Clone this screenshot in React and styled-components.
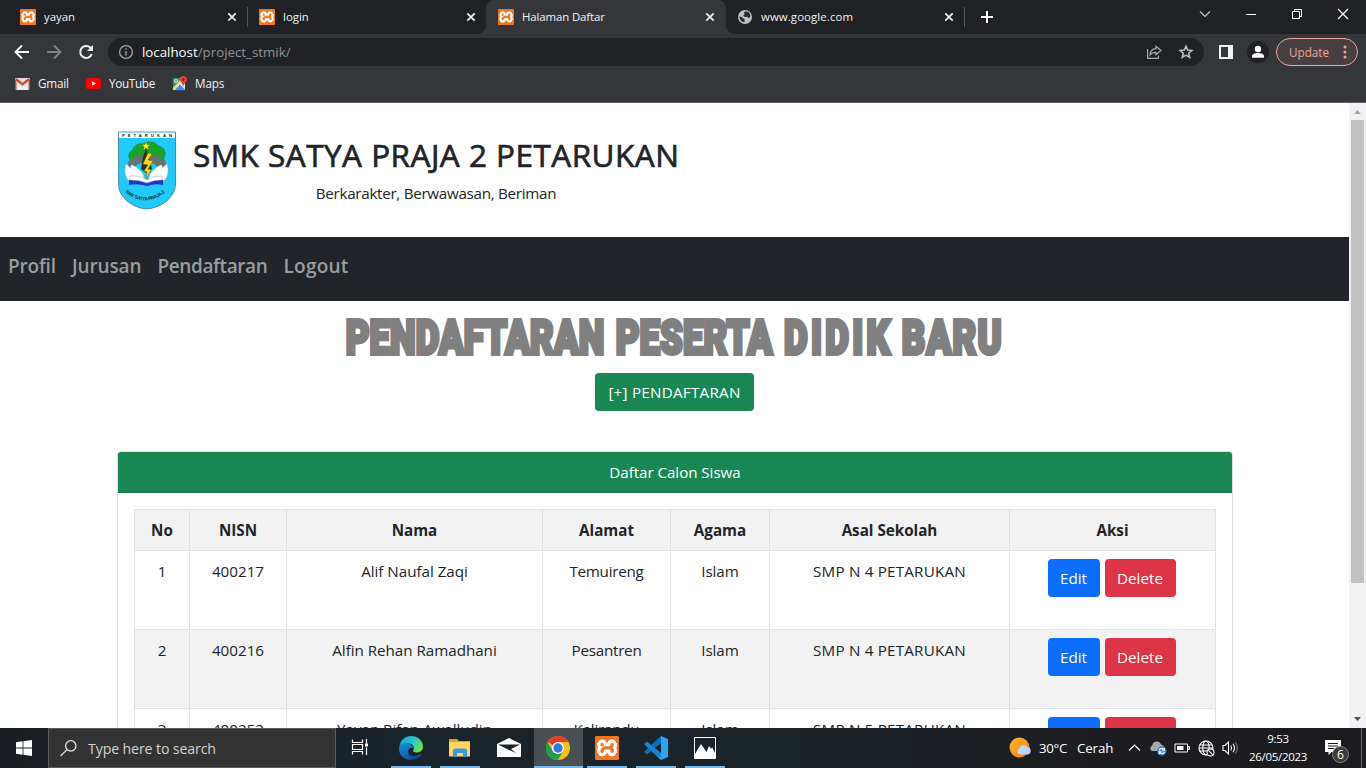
import React from "react";
import styled, { createGlobalStyle, css } from "styled-components";
import { SiXampp } from "react-icons/si";

const Global = createGlobalStyle`
  *, *::before, *::after { box-sizing: border-box; }
  html, body { margin: 0; padding: 0; overflow: hidden; }
  body { font-family: "Open Sans", "Noto Sans", sans-serif; background: #fff; }
  svg { display: block; flex: none; }
  button { font: inherit; border: 0; padding: 0; }
`;

const Screen = styled.div`
  width: 1366px;
  height: 768px;
  display: flex;
  flex-direction: column;
  overflow: hidden;
`;

/* ---------- browser chrome ---------- */

const TabStrip = styled.div`
  height: 34px;
  flex: none;
  display: flex;
  background: #202124;
  padding-left: 8px;
`;

const Tab = styled.div`
  width: 239px;
  height: 34px;
  display: flex;
  align-items: center;
  padding: 0 10px 0 12px;
  color: #f1f3f4;
  font-size: 11.4px;
  position: relative;
  ${(p) =>
    p.$active
      ? css`
          width: 240px;
          padding-right: 11px;
          margin-right: -1px;
          background: #35363a;
          border-radius: 8px 8px 0 0;
          &::before, &::after {
            content: "";
            position: absolute;
            bottom: 0;
            width: 8px;
            height: 8px;
          }
          &::before { left: -8px; background: radial-gradient(circle at 0 0, transparent 7.5px, #35363a 8px); }
          &::after { right: -8px; background: radial-gradient(circle at 100% 0, transparent 7.5px, #35363a 8px); }
        `
      : ""}
`;

const TabTitle = styled.span`
  flex: 1;
  margin-left: 8px;
  padding-bottom: 2px;
  letter-spacing: ${(p) => p.$track || 0}px;
  white-space: nowrap;
`;

const TabDivider = styled.i`
  width: 1px;
  height: 20px;
  margin-top: 7px;
  margin-right: -1px;
  background: #55575b;
`;

const NewTab = styled.div`
  padding: 11px 0 0 17px;
  flex: 1;
`;

const WindowButtons = styled.div`
  display: flex;
  width: 184px;
  height: 28px;
  svg { width: 46px; height: 28px; }
`;

const Toolbar = styled.div`
  height: 36px;
  flex: none;
  display: flex;
  align-items: center;
  background: #35363a;
  padding: 0 8px 0 12px;
`;

const NavIcons = styled.div`
  display: flex;
  gap: 12px;
  width: 96px;
`;

const AddressBar = styled.div`
  width: 1096px;
  height: 28px;
  border-radius: 14px;
  background: #202124;
  display: flex;
  align-items: center;
  padding: 0 10px;
  font-size: 13.3px;
  color: #8f9296;
`;

const Url = styled.span`
  flex: 1;
  margin-left: 8px;
  b { font-weight: 400; color: #fff; }
`;

const AddressIcons = styled.div`
  display: flex;
  gap: 16px;
`;

const ToolbarEnd = styled.div`
  display: flex;
  align-items: center;
  margin-left: 15px;
`;

const Avatar = styled.div`
  width: 22px;
  height: 22px;
  border-radius: 50%;
  background: #202124;
  margin: 0 7px 0 14px;
`;

const UpdatePill = styled.div`
  width: 82px;
  height: 28px;
  border: 1px solid #f2a7a0;
  border-radius: 14px;
  background: #483f42;
  color: #f2a39b;
  font-size: 11.7px;
  display: flex;
  align-items: center;
  justify-content: space-between;
  padding: 0 10px 1px 12px;
`;

const Bookmarks = styled.div`
  height: 33px;
  flex: none;
  display: flex;
  align-items: center;
  background: #35363a;
  border-bottom: 1px solid #5d5e62;
  padding: 0 0 5px 15px;
  color: #f1f3f4;
  font-size: 11.7px;
`;

const Bookmark = styled.div`
  display: flex;
  align-items: center;
  width: ${(p) => p.$w}px;
  gap: ${(p) => p.$gap || 8}px;
  letter-spacing: ${(p) => p.$track || 0}px;
  span { padding-bottom: 1px; }
`;

/* ---------- web page ---------- */

const Viewport = styled.div`
  height: 625px;
  flex: none;
  display: flex;
  overflow: hidden;
`;

const Page = styled.main`
  width: 1349px;
  height: 625px;
  overflow: hidden;
  color: #212529;
  font-size: 15.3px;
`;

const SchoolHeader = styled.header`
  height: 134px;
  padding: 28px 0 0 118px;
  display: flex;
`;

const SchoolText = styled.div`
  width: 488px;
  margin-left: 15px;
  text-align: center;
  white-space: nowrap;
`;

const SchoolName = styled.h1`
  margin: 4px 0 0;
  height: 40px;
  line-height: 39px;
  font-size: 31.5px;
  font-weight: 500;
  -webkit-text-stroke: 0.7px #212529;
  text-align: left;
  letter-spacing: 0.48px;
`;

const Motto = styled.p`
  margin: 6px 0 0;
  padding-right: 2px;
  line-height: 24px;
  font-size: 15.2px;
  letter-spacing: -0.29px;
`;

const NavBar = styled.nav`
  height: 64px;
  background: #212529;
  display: flex;
  gap: 16px;
  padding: 14px 8px;
  line-height: 30px;
  font-size: 19px;
  font-weight: 600;
  color: #9b9d9f;
`;

const NavLink = styled.a`
  width: ${(p) => p.$w}px;
  letter-spacing: ${(p) => p.$track}px;
  white-space: nowrap;
`;

const Hero = styled.section`
  height: 150px;
  display: flex;
  flex-direction: column;
  align-items: center;
`;

const HeroTitle = styled.h2`
  margin: 8px 0 0;
  height: 58px;
  line-height: 58px;
  display: flex;
  font-family: Roboto, sans-serif;
  font-size: 49px;
  font-weight: 900;
  color: #808080;
  -webkit-text-stroke: 4px #808080;
  white-space: nowrap;
  transform: scaleX(0.743);
`;

const HeroWord = styled.span`
  letter-spacing: ${(p) => p.$track}px;
  margin-right: ${(p) => p.$after || 0}px;
`;

const Button = styled.button`
  height: 38px;
  width: ${(p) => p.$w}px;
  border-radius: 4px;
  color: #fff;
  background: ${(p) => p.$bg};
  letter-spacing: ${(p) => p.$track || 0}px;
  margin-top: ${(p) => p.$top || 0}px;
  font-size: 15.2px;
  white-space: nowrap;
`;

const Card = styled.section`
  width: 1116px;
  height: 400px;
  margin-left: 117px;
  border: 1px solid #dfdfdf;
  border-radius: 4px;
`;

const CardHeader = styled.div`
  height: 41px;
  line-height: 40px;
  border-radius: 3px 3px 0 0;
  border-bottom: 1px solid #167446;
  background: #198754;
  color: #fff;
  text-align: center;
  font-size: 15.2px;
  letter-spacing: -0.06px;
`;

const Table = styled.table`
  display: block;
  width: 1082px;
  margin: 16px;
`;

const TableBody = styled.tbody`
  display: block;
`;

const Row = styled.tr`
  display: grid;
  grid-template-columns: 55px 97px 256px 128px 99px 240px 207px;
  height: ${(p) => (p.$head ? 41 : 79)}px;
  background: ${(p) => (p.$shade ? "#f2f2f2" : "#fff")};
  font-weight: ${(p) => (p.$head ? 700 : 400)};
  text-align: center;
`;

const Cell = styled.td`
  border: solid #dee2e6;
  border-width: 1px 0 0 1px;
  padding: 8px 0;
  line-height: 24px;
  white-space: nowrap;
  letter-spacing: ${(p) => p.$track || 0}px;
  font-size: 15.2px;
  &:last-child { border-right-width: 1px; }
`;

const Actions = styled.div`
  display: flex;
  justify-content: center;
  gap: 5px;
  padding-right: 2px;
`;

const Scrollbar = styled.aside`
  width: 17px;
  background: #f1f1f1;
  display: flex;
  flex-direction: column;
  align-items: center;
  justify-content: space-between;
`;

const Thumb = styled.div`
  width: 13px;
  height: 463px;
  background: #c1c1c1;
  margin-bottom: auto;
`;

/* ---------- taskbar ---------- */

const Taskbar = styled.footer`
  height: 40px;
  flex: none;
  display: flex;
  background: linear-gradient(90deg, #1a1e22 0, #19232a 400px, #1a2429 750px, #1c1e22 1000px, #1c1b1f 1366px);
  color: #fff;
`;

const Start = styled.div`
  width: 48px;
  padding: 12px 0 0 16px;
`;

const Search = styled.div`
  width: 288px;
  height: 40px;
  background: #333;
  border: 1px solid #5c5c5c;
  display: flex;
  align-items: center;
  padding-left: 11px;
  gap: 11px;
  color: #d2d2d2;
  font-size: 14.2px;
`;

const SearchText = styled.span`
  letter-spacing: -0.14px;
  padding-top: 1px;
`;

const TaskView = styled.div`
  width: 50.5px;
  display: flex;
  align-items: center;
  padding: 0 0 2px 15px;
`;

const AppSlot = styled.div`
  width: 49px;
  height: 40px;
  display: flex;
  flex-direction: column;
  align-items: center;
  justify-content: space-between;
  padding-top: 8px;
  background: ${(p) => (p.$active ? "#495054" : "transparent")};
  &::after {
    content: "";
    width: ${(p) => (p.$active ? "100%" : "40px")};
    height: 2px;
    background: ${(p) => (p.$idle ? "transparent" : "#76b9ed")};
  }
`;

const Tray = styled.div`
  flex: 1;
  display: flex;
  align-items: center;
  justify-content: flex-end;
  font-size: 13.3px;
`;

const Weather = styled.div`
  display: flex;
  width: 119px;
  align-items: center;
  line-height: 18px;
  white-space: nowrap;
  letter-spacing: -0.12px;
`;

const Temp = styled.span`
  margin-left: 7px;
  width: 38px;
  letter-spacing: -0.3px;
`;

const TrayIcons = styled.div`
  display: flex;
  align-items: center;
  gap: 7.5px;
  width: 116px;
`;

const Clock = styled.div`
  width: 68px;
  font-size: 11.5px;
  line-height: 18px;
  text-align: center;
  letter-spacing: -0.3px;
  padding-bottom: 1px;
`;

const Notice = styled.div`
  width: 50px;
  height: 40px;
  padding: 11px 0 0 13px;
  position: relative;
  border-right: 1px solid #666;
  margin-right: 4px;
`;

const Count = styled.span`
  position: absolute;
  left: 20px;
  top: 18px;
  width: 17px;
  height: 17px;
  border: 1px solid #888;
  border-radius: 50%;
  background: #3a3a3c;
  font-size: 12px;
  line-height: 15px;
  text-align: center;
`;

/* ---------- icons ---------- */

const XamppTile = styled.div`
  width: ${(p) => p.$size}px;
  height: ${(p) => p.$size}px;
  border-radius: ${(p) => p.$size / 12}px;
  background: radial-gradient(#fff 62%, #f37623 64%);
  color: #f37623;
  overflow: hidden;
  flex: none;
  svg { transform: scale(1.16); }
`;

const Xampp = ({ size = 16 }) => (
  <XamppTile $size={size}>
    <SiXampp size={size} />
  </XamppTile>
);

const Close = () => (
  <svg width="10" height="10" viewBox="0 0 10 10" stroke="#f1f3f4" strokeWidth="1.7">
    <path d="M1.300 1.300l7.400 7.400M8.700 1.300L1.300 8.700" />
  </svg>
);

const Globe = () => (
  <svg width="16" height="16" viewBox="0 0 16 16">
    <circle cx="8" cy="8" r="7" fill="#bdc1c6" />
    <path d="M2.4 7.2l2.8 1.2 2.4 2.2v2.6C4.8 13 2.4 10.6 2.4 7.200zM7 3.600l2-1.400 3 1.200 1.500 3.400-1.500 2.600-1.800-1.600-2.600.2-1.400-1.400 1.400-1z" fill="#292a2d" />
  </svg>
);

const Back = ({ dim }) => (
  <svg width="20" height="20" viewBox="0 0 20 20" fill="none" stroke={dim ? "#808286" : "#f1f3f4"} strokeWidth="1.9">
    {dim ? <path d="M3 10h13M10 3.500l6.500 6.500-6.500 6.500" /> : <path d="M17 10H4M10 3.500L3.500 10l6.500 6.500" />}
  </svg>
);

const Reload = () => (
  <svg width="20" height="20" viewBox="0 0 20 20" fill="none" stroke="#f1f3f4" strokeWidth="2">
    <path d="M15.800 12.200A6 6 0 1 1 14.400 5.700L16 7.400" />
    <path d="M17 3v6h-6z" fill="#f1f3f4" stroke="none" />
  </svg>
);

const Info = () => (
  <svg width="16" height="16" viewBox="0 0 16 16" fill="none" stroke="#9aa0a6" strokeWidth="1.400">
    <circle cx="8" cy="8" r="6.400" />
    <path d="M8 7v4.500M8 4.300v1.500" />
  </svg>
);

const Share = () => (
  <svg width="16" height="16" viewBox="0 0 16 16" fill="none" stroke="#a9acb0" strokeWidth="1.200">
    <path d="M1.600 5v9.400h10.800v-3" />
    <path d="M10 2.200l5 4.300-5 4.300V8.300C7 8.200 5.500 9 4 11c.300-3.800 2.500-6 6-6.300z" />
  </svg>
);

const Star = () => (
  <svg width="16" height="16" viewBox="0 0 16 16" fill="none" stroke="#bdc1c6" strokeWidth="1.500">
    <path d="M8 2.200l1.700 3.900 4.200.4-3.200 2.800 1 4.100L8 11.200l-3.700 2.200 1-4.100-3.200-2.800 4.200-.4z" />
  </svg>
);

const SidePanel = () => (
  <svg width="14" height="14" viewBox="0 0 14 14">
    <path d="M0 0h14v14H0zM2 2v10h7V2z" fill="#f1f3f4" fillRule="evenodd" />
  </svg>
);

const Person = () => (
  <svg width="22" height="22" viewBox="0 0 22 22" fill="#fff">
    <circle cx="11" cy="8" r="3.200" />
    <path d="M5 16.800v-1.600c0-2 3-3.200 6-3.200s6 1.200 6 3.200v1.600z" />
  </svg>
);

const Dots = () => (
  <svg width="4" height="14" viewBox="0 0 4 14" fill="#f2a39b">
    <circle cx="2" cy="2" r="1.500" />
    <circle cx="2" cy="7" r="1.500" />
    <circle cx="2" cy="12" r="1.500" />
  </svg>
);

const Gmail = () => (
  <svg width="15" height="12" viewBox="0 0 15 12">
    <rect width="15" height="12" rx="1" fill="#dcdcdc" />
    <path d="M2.500 12V5l5 3.800 5-3.800v7z" fill="#f1f1f1" />
    <path d="M1 1.200l6.500 5.200L14 1.200" fill="none" stroke="#d93f35" strokeWidth="2.200" />
    <path d="M.7 12V1.500M14.300 12V1.500" stroke="#d93f35" strokeWidth="1.400" />
  </svg>
);

const YouTube = () => (
  <svg width="15" height="11" viewBox="0 0 15 11">
    <rect width="15" height="11" rx="2.600" fill="#f00" />
    <path d="M6 3.200v4.600l4-2.300z" fill="#fff" />
  </svg>
);

const Maps = () => (
  <svg width="16" height="16" viewBox="0 0 16 16">
    <path d="M1 2h12v12H1z" fill="#dfe3e6" />
    <path d="M1 2h9L1 12z" fill="#1fa463" />
    <path d="M2.500 14.200L8 8.500l5.500 5.700z" fill="#4a89f3" />
    <path d="M1 13L12 2" stroke="#f5d04b" strokeWidth="1.200" />
    <circle cx="4" cy="5" r="1.500" fill="none" stroke="#fff" strokeWidth=".8" />
    <path d="M11.300 0a3.500 3.500 0 0 1 3.500 3.500c0 2.400-2.700 3.200-3.500 7-.8-3.800-3.500-4.600-3.500-7A3.500 3.500 0 0 1 11.300 0z" fill="#ea4335" />
    <circle cx="11.300" cy="3.600" r="1.300" fill="#8c1f18" />
  </svg>
);

const Hand = () => (
  <path d="M8 33c1 0 3 3 5 4-1-3 1-4 3-2 3 1 6 4 9 8 1 3 1 5 0 8-5 1-11 0-15-2-3-4-4-11-2-16z" fill="#fff" stroke="#9ab7bd" strokeWidth=".5" />
);

const SchoolCrest = () => (
  <svg width="60" height="80" viewBox="0 0 60 80">
    <defs>
      <path id="crestArc" d="M7 61Q28 79 50 59" />
    </defs>
    <path d="M.5 1h57v52c0 13-14 24-29 25C14 77 .5 66 .5 53z" fill="#20cbfb" stroke="#407681" strokeWidth=".8" />
    <path d="M1 1.500h56V7H1z" fill="#fff" />
    <text x="4" y="6" fontFamily="Liberation Sans" fontWeight="700" fontSize="4.200" textLength="50" fill="#222">PETARUKAN</text>
    <path d="M13 30c-4-4-2-10 2-11 1-5 6-7 10-6 5-4 13-2 15 2 6 1 9 6 6 11 1 4-3 6-7 6H18c-3 1-5 0-5-2z" fill="#16a52c" stroke="#1e7c2a" strokeWidth=".6" />
    <path d="M9 36l2-7 3 1 1-5 5 1 2-4 4 3 4 0 4-3 3 4 5-1 1 5 4-1 2 7-7 2-7-6-6-3-8 3-5 5z" fill="#687174" />
    <path d="M23 38l2-12 3-9 3 9 3 12-6 4z" fill="#1e3826" />
    <Hand />
    <g transform="translate(57 0) scale(-1 1)"><Hand /></g>
    <path d="M11 49q10-2 18 1 9-3 16-1v5q-8-2-16 1-9-3-18-1z" fill="#2233c8" />
    <path d="M12 45q10-1 17 4 8-5 15-4v4q-8 0-15 3-8-3-17-3z" fill="#fff" stroke="#889" strokeWidth=".4" />
    <path d="M28 11l1.200 2.800 3 .1-2.300 1.800.9 3-2.800-1.700-2.600 1.700.8-3-2.300-1.900 3-.1z" fill="#ffe51f" stroke="#786b00" strokeWidth=".3" />
    <path d="M30 22l-5 11 5 1-4 6 3 1-1 7 5-9-3-1 5-8-5-1 4-6z" fill="#ffd91c" stroke="#836800" strokeWidth=".5" />
    <text fontFamily="Liberation Sans" fontWeight="700" fontSize="4.900" fill="#14344a">
      <textPath href="#crestArc" textLength="44">SMK SATYA PRAJA 2</textPath>
    </text>
  </svg>
);

const WindowsLogo = () => (
  <svg width="16" height="16" viewBox="0 0 16 16" fill="#fff">
    <path d="M0 2.200L6.600 1.300v6.300H0zM7.400 1.200L16 0v7.600H7.400zM0 8.400h6.600v6.300L0 13.800zM7.400 8.400H16V16l-8.600-1.200z" />
  </svg>
);

const Magnifier = () => (
  <svg width="17" height="17" viewBox="0 0 17 17" fill="none" stroke="#e4e4e4" strokeWidth="1.300">
    <circle cx="10.800" cy="5.900" r="5.200" />
    <path d="M7 9.600L.6 16" />
  </svg>
);

const TaskViewIcon = () => (
  <svg width="17" height="16" viewBox="0 0 17 16" fill="none" stroke="#fff" strokeWidth="1.200">
    <path d="M1.500 .5v3h10v-3M1.500 15.500v-3h10v3M1.500 5.500h10v5h-10zM15.500 0v4.500M15.500 8.500V16" />
    <path d="M14 4.500h3v3h-3z" fill="#fff" stroke="none" />
  </svg>
);

const Edge = () => (
  <svg width="24" height="24" viewBox="0 0 24 24">
    <defs>
      <linearGradient id="edgeTop" x1="0" x2="1" y1=".2" y2=".6">
        <stop offset="0" stopColor="#199fdc" />
        <stop offset=".55" stopColor="#2fc6c9" />
        <stop offset="1" stopColor="#6be345" />
      </linearGradient>
      <linearGradient id="edgeLow" x1="0" x2=".5" y1="0" y2="1">
        <stop offset="0" stopColor="#1b92dc" />
        <stop offset="1" stopColor="#0c5aa8" />
      </linearGradient>
    </defs>
    <path d="M.3 11C1 4.500 6 0 12 0c7 0 12 5 12 10.500 0 4-3 6-6.300 6-3 0-4.200-1.300-3.500-2.300 1.400-2 .7-6-3.700-6.700C6 6.800 1.500 8 .3 11z" fill="url(#edgeTop)" />
    <path d="M.1 12C.5 8.500 4 6.600 8 7c3.500.3 6.500 3 6.300 5.500-1.500-1.600-5.300-.2-5.200 3.500.1 3.500 3.500 6.600 8 5.500C14 24 9 24.800 5 22 1.500 19.600-.2 16 .1 12z" fill="url(#edgeLow)" />
    <path d="M9.100 15.500c.5 3.500 4 5 7.600 4.400 2-.3 3.800-1.300 5-2.200.8-.5 1.200.1.800.7-1.500 2.600-4 4.600-7.500 4.600-4.500-.6-7.300-4-5.900-7.500z" fill="#174e8e" />
  </svg>
);

const Explorer = () => (
  <svg width="24" height="24" viewBox="0 0 24 24">
    <path d="M1 3h8l2 2h11v5H1z" fill="#dfa21a" />
    <path d="M1 6h21v14.500H1z" fill="#ffd663" />
    <path d="M5 21v-6.500a2 2 0 0 1 2-2h10a2 2 0 0 1 2 2V21h-4v-4H9v4z" fill="#3c97dd" />
  </svg>
);

const Mail = () => (
  <svg width="24" height="24" viewBox="0 0 24 24">
    <path d="M0 8L12 2l12 6v13H0z" fill="#fff" />
    <path d="M1 8.500h22l-9 4.500 5 4-8-3.500z" fill="#1a2329" />
  </svg>
);

const Chrome = () => (
  <svg width="24" height="24" viewBox="0 0 24 24">
    <circle cx="12" cy="12" r="12" fill="#fbc116" />
    <path d="M12 12L1.600 6A12 12 0 0 1 22.400 6H12z" fill="#e33b2e" />
    <path d="M12 12l5.200 3L12 24A12 12 0 0 1 1.600 6l5.200 9z" fill="#249d4d" />
    <circle cx="12" cy="12" r="6" fill="#fff" />
    <circle cx="12" cy="12" r="4.700" fill="#3478e8" />
  </svg>
);

const VsCode = () => (
  <svg width="24" height="24" viewBox="0 0 24 24">
    <path d="M17 0v7L3 18.500 0 16l14.500-14z" fill="#0b6fb9" />
    <path d="M17 24v-7L3 5.500 0 8l14.500 14z" fill="#1686d2" />
    <path d="M17 0l7 3v18l-7 3-2.500-2 2.500-1z" fill="#2ca5ee" />
  </svg>
);

const Photos = () => (
  <svg width="24" height="24" viewBox="0 0 24 24">
    <path d="M1.500 1.500h21v21h-21z" fill="none" stroke="#fff" />
    <path d="M2 18l6-10 5.500 8 2.500-6 2 3 1-2 3 6v5H2z" fill="#fff" />
  </svg>
);

const SunCloud = () => (
  <svg width="23" height="22" viewBox="0 0 23 22">
    <defs>
      <linearGradient id="sun" x1="0" x2="1" y1="0" y2="1">
        <stop offset="0" stopColor="#fdb82c" />
        <stop offset="1" stopColor="#ef7a16" />
      </linearGradient>
    </defs>
    <circle cx="10.500" cy="10.500" r="10" fill="url(#sun)" />
    <path d="M11 17.500a3.300 3.300 0 0 1-.4-6.400 4.300 4.300 0 0 1 7.800-1A3.800 3.800 0 0 1 19 17.500z" fill="#b9d5fb" />
  </svg>
);

const Caret = () => (
  <svg width="13" height="16" viewBox="0 0 13 16" fill="none" stroke="#fff" strokeWidth="1.200">
    <path d="M1 10.500L6.500 5l5.500 5.500" />
  </svg>
);

const CloudSync = () => (
  <svg width="18" height="16" viewBox="0 0 18 16">
    <path d="M3 11a3 3 0 0 1 .3-5.500A4.500 4.500 0 0 1 12 4.500 3.600 3.600 0 0 1 14 11z" fill="#a7a7a7" />
    <circle cx="12.800" cy="11" r="4.700" fill="#2b84d0" />
    <path d="M10.100 10.300c1-2.600 4-2.400 5-.4M15.500 11.700c-1 2.600-4 2.400-5 .4M15.400 7.800v2.300h-2.300M10.200 14.200v-2.300h2.300" fill="none" stroke="#fff" strokeWidth="1.100" />
  </svg>
);

const Battery = () => (
  <svg width="16" height="16" viewBox="0 0 16 16">
    <path d="M1 4h12.500v8H1zM14 6.500h1.500v3H14z" fill="none" stroke="#fff" />
    <path d="M3 6h6.500v4H3z" fill="#fff" />
  </svg>
);

const NoNetwork = () => (
  <svg width="17" height="17" viewBox="0 0 17 17" fill="none" stroke="#fff" strokeWidth="1.100">
    <circle cx="8" cy="8" r="7" />
    <ellipse cx="8" cy="8" rx="3.200" ry="7" />
    <path d="M1.700 5h12.600M1.700 11H9M1 8h14" />
    <circle cx="12.500" cy="12.500" r="3.500" fill="#1c1c20" />
    <path d="M10.200 10.200l4.600 4.600" />
  </svg>
);

const Speaker = () => (
  <svg width="17" height="16" viewBox="0 0 17 16" fill="none" stroke="#fff" strokeWidth="1.100">
    <path d="M1 5.500h2L6.500 2v12L3 10.500H1z" />
    <path d="M8.800 5.500q1.500 2.500 0 5M11 3.700q3 4.300 0 8.600" />
    <path d="M13.300 2q4.200 6 0 12" stroke="#777" />
  </svg>
);

const NoticeIcon = () => (
  <svg width="17" height="17" viewBox="0 0 17 17">
    <path d="M0 1h16v12H6.500L3.500 16v-3H0z" fill="#fff" />
    <path d="M3 4.500h10M3 7h10M3 9.500h6" stroke="#1c1c20" />
  </svg>
);

const Arrow = ({ down }) => (
  <svg width="17" height="17" viewBox="0 0 17 17">
    {down ? <path d="M5 6h7l-3.500 4z" fill="#505050" /> : <path d="M5 11h7L8.500 7z" fill="#a3a3a3" />}
  </svg>
);

/* ---------- data ---------- */

const columns = ["No", "NISN", "Nama", "Alamat", "Agama", "Asal Sekolah", "Aksi"];
const students = [
  ["1", "400217", "Alif Naufal Zaqi", "Temuireng", "Islam", "SMP N 4 PETARUKAN"],
  ["2", "400216", "Alfin Rehan Ramadhani", "Pesantren", "Islam", "SMP N 4 PETARUKAN"],
  ["3", "400252", "Yayan Rifan Awalludin", "Kalirandu", "Islam", "SMP N 5 PETARUKAN"],
];
const tracks = [0, 0, -0.03, -0.24, -0.1, 0.2];

export default function App() {
  return (
    <Screen>
      <Global />
      <TabStrip>
        <Tab><Xampp /><TabTitle>yayan</TabTitle><Close /></Tab>
        <TabDivider />
        <Tab><Xampp /><TabTitle>login</TabTitle><Close /></Tab>
        <Tab $active><Xampp /><TabTitle $track={-0.1}>Halaman Daftar</TabTitle><Close /></Tab>
        <Tab><Globe /><TabTitle $track={0.1}>www.google.com</TabTitle><Close /></Tab>
        <TabDivider />
        <NewTab>
          <svg width="12" height="12" viewBox="0 0 12 12" stroke="#fff" strokeWidth="2"><path d="M6 0v12M0 6h12" /></svg>
        </NewTab>
        <WindowButtons>
          <svg viewBox="0 0 46 28" fill="none" stroke="#c4c6c9" strokeWidth="1.200"><path d="M18 11.500l5 5 5-5" /></svg>
          <svg viewBox="0 0 46 28" stroke="#fff"><path d="M18 14.500h10" /></svg>
          <svg viewBox="0 0 46 28" fill="none" stroke="#fff"><path d="M18.500 11.500h7v7h-7zM20.500 11V9.500h7v7H26" /></svg>
          <svg viewBox="0 0 46 28" stroke="#fff" strokeWidth="1.200"><path d="M18 9l10 10M28 9L18 19" /></svg>
        </WindowButtons>
      </TabStrip>
      <Toolbar>
        <NavIcons><Back /><Back dim /><Reload /></NavIcons>
        <AddressBar>
          <Info />
          <Url><b>localhost</b>/project_stmik/</Url>
          <AddressIcons><Share /><Star /></AddressIcons>
        </AddressBar>
        <ToolbarEnd>
          <SidePanel />
          <Avatar><Person /></Avatar>
          <UpdatePill>Update<Dots /></UpdatePill>
        </ToolbarEnd>
      </Toolbar>
      <Bookmarks>
        <Bookmark $w={71} $track={-0.2}><Gmail /><span>Gmail</span></Bookmark>
        <Bookmark $w={86} $track={-0.3}><YouTube /><span>YouTube</span></Bookmark>
        <Bookmark $w={60} $gap={7} $track={-0.1}><Maps /><span>Maps</span></Bookmark>
      </Bookmarks>

      <Viewport>
        <Page>
          <SchoolHeader>
            <SchoolCrest />
            <SchoolText>
              <SchoolName>SMK SATYA PRAJA 2 PETARUKAN</SchoolName>
              <Motto>Berkarakter, Berwawasan, Beriman</Motto>
            </SchoolText>
          </SchoolHeader>
          <NavBar>
            <NavLink $w={48} $track={-0.2}>Profil</NavLink>
            <NavLink $w={69.5} $track={-0.15}>Jurusan</NavLink>
            <NavLink $w={110} $track={-0.4}>Pendaftaran</NavLink>
            <NavLink $w={65} $track={0.25}>Logout</NavLink>
          </NavBar>
          <Hero>
            <HeroTitle>
              <HeroWord $track={0.15} $after={15}>PENDAFTARAN</HeroWord>
              <HeroWord $track={0.2} $after={15.5}>PESERTA</HeroWord>
              <HeroWord $track={4.5} $after={11.5}>DIDIK</HeroWord>
              <HeroWord $track={1.7}>BARU</HeroWord>
            </HeroTitle>
            <Button $w={159} $bg="#198754" $top={6} $track={0.25}>[+] PENDAFTARAN</Button>
          </Hero>
          <Card>
            <CardHeader>Daftar Calon Siswa</CardHeader>
            <Table cellSpacing="0">
              <TableBody>
                <Row $head $shade>
                  {columns.map((c) => <Cell as="th" key={c}>{c}</Cell>)}
                </Row>
                {students.map((s, i) => (
                  <Row key={s[0]} $shade={i % 2 === 1}>
                    {s.map((v, j) => <Cell key={j} $track={tracks[j]}>{v}</Cell>)}
                    <Cell>
                      <Actions>
                        <Button $w={52} $bg="#0d6efd">Edit</Button>
                        <Button $w={71} $bg="#dc3545">Delete</Button>
                      </Actions>
                    </Cell>
                  </Row>
                ))}
              </TableBody>
            </Table>
          </Card>
        </Page>
        <Scrollbar><Arrow /><Thumb /><Arrow down /></Scrollbar>
      </Viewport>

      <Taskbar>
        <Start><WindowsLogo /></Start>
        <Search><Magnifier /><SearchText>Type here to search</SearchText></Search>
        <TaskView><TaskViewIcon /></TaskView>
        <AppSlot><Edge /></AppSlot>
        <AppSlot><Explorer /></AppSlot>
        <AppSlot $idle><Mail /></AppSlot>
        <AppSlot $active><Chrome /></AppSlot>
        <AppSlot><Xampp size={24} /></AppSlot>
        <AppSlot><VsCode /></AppSlot>
        <AppSlot><Photos /></AppSlot>
        <Tray>
          <Weather><SunCloud /><Temp>30°C</Temp><span>Cerah</span></Weather>
          <TrayIcons><Caret /><CloudSync /><Battery /><NoNetwork /><Speaker /></TrayIcons>
          <Clock>9:53<br />26/05/2023</Clock>
          <Notice><NoticeIcon /><Count>6</Count></Notice>
        </Tray>
      </Taskbar>
    </Screen>
  );
}
